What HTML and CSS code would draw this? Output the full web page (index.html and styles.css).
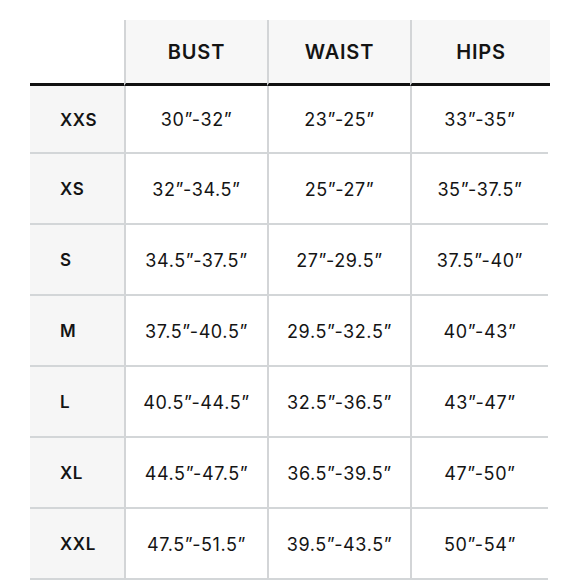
FILE: index.html
```html
<!DOCTYPE html>
<html lang="en">
<head>
<meta charset="utf-8">
<title>Size Chart</title>
<link rel="stylesheet" href="styles.css">
</head>
<body>
<div class="chart">
  <div class="cell head corner"></div>
  <div class="cell head col">BUST</div>
  <div class="cell head col">WAIST</div>
  <div class="cell head col last">HIPS</div>

  <div class="cell size first">XXS</div>
  <div class="cell val first">30”-32”</div>
  <div class="cell val first">23”-25”</div>
  <div class="cell val first last">33”-35”</div>

  <div class="cell size">XS</div>
  <div class="cell val">32”-34.5”</div>
  <div class="cell val">25”-27”</div>
  <div class="cell val last">35”-37.5”</div>

  <div class="cell size">S</div>
  <div class="cell val">34.5”-37.5”</div>
  <div class="cell val">27”-29.5”</div>
  <div class="cell val last">37.5”-40”</div>

  <div class="cell size">M</div>
  <div class="cell val">37.5”-40.5”</div>
  <div class="cell val">29.5”-32.5”</div>
  <div class="cell val last">40”-43”</div>

  <div class="cell size">L</div>
  <div class="cell val">40.5”-44.5”</div>
  <div class="cell val">32.5”-36.5”</div>
  <div class="cell val last">43”-47”</div>

  <div class="cell size">XL</div>
  <div class="cell val">44.5”-47.5”</div>
  <div class="cell val">36.5”-39.5”</div>
  <div class="cell val last">47”-50”</div>

  <div class="cell size">XXL</div>
  <div class="cell val">47.5”-51.5”</div>
  <div class="cell val">39.5”-43.5”</div>
  <div class="cell val last">50”-54”</div>
</div>
</body>
</html>
```

FILE: styles.css
```css
html, body {
  margin: 0;
  padding: 0;
  background: #ffffff;
}

body {
  width: 580px;
  height: 580px;
  overflow: hidden;
  font-family: Inter, "Liberation Sans", sans-serif;
  color: #141414;
}

.chart {
  margin: 20px 0 0 30px;
  width: 520px;
  display: grid;
  grid-template-columns: 94px 143px 143px 140px;
  grid-template-rows: 66px 68px repeat(6, 71px);
}

.cell {
  box-sizing: border-box;
  display: flex;
  align-items: center;
  justify-content: center;
  padding-top: 1px;
}

.head {
  border-bottom: 3px solid #111111;
  font-size: 20px;
  font-weight: 600;
  letter-spacing: 0.8px;
}

.col {
  background: #f7f7f7;
  border-left: 2px solid #d3d5d7;
}

.size {
  justify-content: flex-start;
  padding-left: 30px;
  background: #f6f6f6;
  border-bottom: 2px solid #d3d6d8;
  font-size: 17px;
  font-weight: 600;
  letter-spacing: 0.6px;
}

.val {
  border-left: 2px solid #d3d5d7;
  border-bottom: 2px solid #d3d6d8;
  font-size: 18px;
  font-weight: 400;
  letter-spacing: 0.6px;
}

.val.last {
  margin-right: 2px;
}
```
